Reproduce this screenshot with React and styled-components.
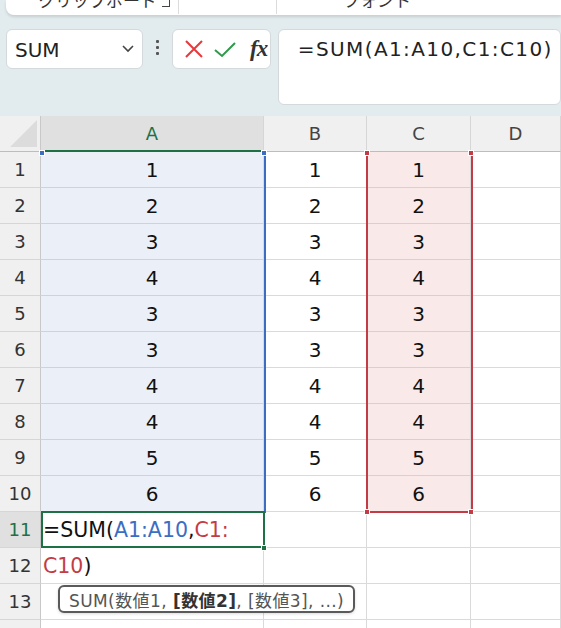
import React from 'react';
import styled, { createGlobalStyle } from 'styled-components';

const GlobalStyle = createGlobalStyle`
  html, body {
    margin: 0;
    padding: 0;
    background: #e2ebed;
    overflow: hidden;
  }
  body {
    font-family: "DejaVu Sans", "Noto Sans CJK JP", sans-serif;
  }
`;

const Page = styled.div`
  width: 561px;
  height: 628px;
  overflow: hidden;
  display: flex;
  flex-direction: column;
  background: #e2ebed;
  & > * {
    flex-shrink: 0;
  }
`;

/* ribbon remains at the very top */
const Ribbon = styled.div`
  margin-left: 6px;
  height: 15px;
  background: #fff;
  border-bottom-left-radius: 8px;
  box-shadow: 0 2px 3px rgba(0, 0, 0, 0.12);
  display: flex;
  align-items: flex-end;
  overflow: hidden;
`;

const GroupLabel = styled.div`
  width: ${(p) => p.w}px;
  padding-left: ${(p) => p.pl}px;
  box-sizing: border-box;
  font-family: "Noto Sans CJK JP", sans-serif;
  font-size: 17px;
  line-height: 17px;
  color: #333;
  margin-bottom: 7px;
  white-space: nowrap;
`;

const Launcher = styled.div`
  width: 7px;
  height: 6px;
  border-right: 1.5px solid #444;
  border-bottom: 1.5px solid #444;
  margin: 0 8px 8px 6px;
`;

const RibbonDivider = styled.div`
  width: 1px;
  height: 14px;
  background: #dcdcdc;
  align-self: flex-start;
`;

const FormulaRow = styled.div`
  display: flex;
  align-items: flex-start;
  padding: 14px 0 0 6px;
  height: 101px;
  box-sizing: border-box;
`;

const Panel = styled.div`
  background: #fff;
  border: 1px solid #d4d9db;
  border-radius: 6px;
  box-sizing: border-box;
  height: ${(p) => p.h}px;
  width: ${(p) => p.w}px;
  margin-left: ${(p) => p.ml || 0}px;
  display: flex;
  align-items: ${(p) => (p.top ? 'flex-start' : 'center')};
`;

const NameText = styled.span`
  flex: 1;
  font-size: 20px;
  color: #222;
  padding-left: 8px;
  padding-top: 2px;
`;

const Dots = styled.div`
  width: 30px;
  display: flex;
  flex-direction: column;
  align-items: center;
  gap: 3px;
  padding-top: 11px;
  & span {
    width: 3px;
    height: 3px;
    border-radius: 1px;
    background: #555;
  }
`;

const BtnGroup = styled.div`
  display: flex;
  align-items: center;
  gap: 8px;
  padding-left: 10px;
`;

const Fx = styled.span`
  font-family: "Liberation Serif", "DejaVu Serif", serif;
  font-style: italic;
  font-weight: bold;
  font-size: 23px;
  color: #333;
  margin-left: 5px;
  letter-spacing: -1px;
`;

const FormulaText = styled.div`
  font-size: 20px;
  color: #222;
  letter-spacing: 1.4px;
  padding: 7px 0 0 19px;
  white-space: nowrap;
`;

const Sheet = styled.div`
  position: relative;
  display: grid;
  grid-template-columns: 41px 223px 103px 104px 90px;
  grid-auto-rows: 36px;
  background: #fff;
`;

const Corner = styled.div`
  background: #f0f0f0;
  border-right: 1px solid #c8c8c8;
  border-bottom: 1px solid #bdbdbd;
  position: relative;
  &::after {
    content: '';
    position: absolute;
    right: 3px;
    bottom: 4px;
    width: 0;
    height: 0;
    border-left: 27px solid transparent;
    border-bottom: 27px solid #dcdcdc;
  }
`;

const ColHead = styled.div`
  background: ${(p) => (p.active ? '#e0e0e0' : '#f0f0f0')};
  color: ${(p) => (p.active ? '#1e7145' : '#444')};
  border-right: 1px solid #d6d6d6;
  border-bottom: ${(p) => (p.active ? '2px solid #1e7145' : '1px solid #bdbdbd')};
  font-size: 18px;
  display: flex;
  align-items: center;
  justify-content: center;
  padding-top: ${(p) => (p.active ? '1px' : '0')};
  box-sizing: border-box;
`;

const RowHead = styled.div`
  background: ${(p) => (p.active ? '#e0e0e0' : '#f0f0f0')};
  color: ${(p) => (p.active ? '#1e7145' : '#333')};
  border-right: 1px solid #c8c8c8;
  border-bottom: 1px solid #d6d6d6;
  font-size: 18px;
  display: flex;
  align-items: center;
  justify-content: center;
  box-sizing: border-box;
`;

const Cell = styled.div`
  background: ${(p) => p.bg || '#fff'};
  border-right: 1px solid #dadada;
  border-bottom: 1px solid ${(p) => (p.bg ? '#d2d2d2' : '#dadada')};
  font-size: 20px;
  color: #111;
  display: flex;
  align-items: center;
  justify-content: center;
  box-sizing: border-box;
`;

const Range = styled.div`
  position: absolute;
  left: ${(p) => p.x}px;
  top: ${(p) => p.y}px;
  width: ${(p) => p.w}px;
  height: ${(p) => p.h}px;
  box-sizing: border-box;
  border: 2px solid ${(p) => p.color};
  ${(p) => p.noLeft && 'border-left-color: transparent;'}
  border-top-color: transparent;
  pointer-events: none;
`;

const Handle = styled.div`
  position: absolute;
  left: ${(p) => p.x - 3}px;
  top: ${(p) => p.y - 3}px;
  width: 6px;
  height: 6px;
  background: ${(p) => p.color};
  border: 1px solid #fff;
  box-sizing: border-box;
`;

const Active = styled.div`
  position: absolute;
  left: 41px;
  top: 395px;
  width: 224px;
  height: 37px;
  border: 2px solid #1e7145;
  box-sizing: border-box;
`;

const Editing = styled.div`
  position: absolute;
  left: 43px;
  top: 396px;
  font-size: 20.5px;
  line-height: 36px;
  color: #111;
  white-space: nowrap;
`;

const Ref = styled.span`
  color: ${(p) => p.color};
`;

const Tip = styled.div`
  position: absolute;
  left: 58px;
  top: 469px;
  height: 28px;
  padding: 0 9px;
  border: 2px solid #5a5a5a;
  border-radius: 6px;
  background: #fff;
  box-sizing: border-box;
  font-size: 17px;
  letter-spacing: 0.4px;
  color: #555;
  display: flex;
  align-items: center;
  white-space: nowrap;
  box-shadow: 0 1px 3px rgba(0, 0, 0, 0.15);
  & b {
    color: #333;
    margin-left: 6px;
  }
`;

const colA = [1, 2, 3, 4, 3, 3, 4, 4, 5, 6];
const colB = [1, 2, 3, 4, 3, 3, 4, 4, 5, 6];
const colC = [1, 2, 3, 4, 3, 3, 4, 4, 5, 6];

const BLUE = '#3b6ec2';
const RED = '#c33c45';

export default function App() {
  const rows = [];
  for (let i = 0; i < 14; i++) {
    const inData = i < 10;
    rows.push(
      <React.Fragment key={i}>
        {/* row 14 falls below the window edge; only its top sliver shows */}
        <RowHead active={i === 10}>{i < 13 ? i + 1 : ''}</RowHead>
        <Cell bg={inData ? '#ebf0f8' : null}>{inData ? colA[i] : ''}</Cell>
        <Cell>{inData ? colB[i] : ''}</Cell>
        <Cell bg={inData ? '#f9e9e9' : null}>{inData ? colC[i] : ''}</Cell>
        <Cell />
      </React.Fragment>
    );
  }

  return (
    <Page>
      <GlobalStyle />
      <Ribbon>
        <GroupLabel w={150} pl={32}>クリップボード</GroupLabel>
        <Launcher />
        <RibbonDivider />
        <GroupLabel w={97} pl={0} />
        <RibbonDivider />
        <GroupLabel w={130} pl={66}>フォント</GroupLabel>
      </Ribbon>

      <FormulaRow>
        <Panel w={140} h={40}>
          <NameText>SUM</NameText>
          <svg width="24" height="14" viewBox="0 0 24 14">
            <path d="M5 4 L10 9 L15 4" fill="none" stroke="#444" strokeWidth="1.6" />
          </svg>
        </Panel>
        <Dots>
          <span />
          <span />
          <span />
        </Dots>
        <Panel w={101} h={40}>
          <BtnGroup>
            <svg width="22" height="22" viewBox="0 0 22 22">
              <path d="M3 3 L19 19 M19 3 L3 19" stroke="#e8383c" strokeWidth="2" />
            </svg>
            <svg width="24" height="22" viewBox="0 0 24 22">
              <path d="M2 12 L9 18 L22 5" fill="none" stroke="#2e9a4a" strokeWidth="2" />
            </svg>
            <Fx>fx</Fx>
          </BtnGroup>
        </Panel>
        <Panel w={290} h={76} ml={7} top>
          <FormulaText>=SUM(A1:A10,C1:C10)</FormulaText>
        </Panel>
      </FormulaRow>

      <Sheet>
        <Corner />
        <ColHead active>A</ColHead>
        <ColHead>B</ColHead>
        <ColHead>C</ColHead>
        <ColHead>D</ColHead>
        {rows}

        <Range x={41} y={36} w={225} h={361} color={BLUE} noLeft />
        <Handle x={42} y={37} color={BLUE} />
        <Handle x={264} y={37} color={BLUE} />

        <Range x={366} y={36} w={107} h={361} color={RED} />
        <Handle x={367} y={37} color={RED} />
        <Handle x={471} y={37} color={RED} />
        <Handle x={367} y={396} color={RED} />
        <Handle x={471} y={396} color={RED} />

        <Active />
        <Handle x={264} y={432} color="#1e7145" />

        <Editing>
          =SUM(<Ref color={BLUE}>A1:A10</Ref>,<Ref color={RED}>C1:</Ref>
          <br />
          <Ref color={RED}>C10</Ref>)
        </Editing>

        <Tip>
          SUM(数値1,<b>[数値2]</b>, [数値3], ...)
        </Tip>
      </Sheet>
    </Page>
  );
}
